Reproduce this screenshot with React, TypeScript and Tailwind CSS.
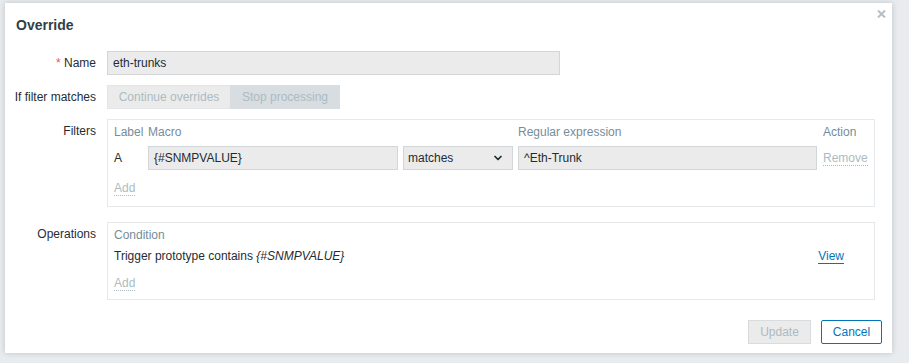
import { ChevronDown } from "lucide-react";

const font = "font-['Liberation_Sans',Arial,sans-serif]";

function Field({ value, width }: { value: string; width: string }) {
  return (
    <div
      className={`${width} h-[24px] shrink-0 rounded-none border border-[#d3d6d8] bg-[#ebebeb] pl-[5px] text-[12px] leading-[22px] text-[#1f2c33]`}
    >
      {value}
    </div>
  );
}

function Label({ children }: { children: React.ReactNode }) {
  return (
    <div className="w-[91px] shrink-0 text-right text-[12px] leading-[24px] text-[#1f2c33]">
      {children}
    </div>
  );
}

function DimLink({ children }: { children: React.ReactNode }) {
  return (
    <span className="border-b border-dotted border-[#acbbc2] text-[#acbbc2]">
      {children}
    </span>
  );
}

export default function App() {
  return (
    <div className={`${font} h-[363px] w-[909px] bg-[#e9ecef] pl-[5px] pt-[3px]`}>
      <div className="relative flex h-[350px] w-[887px] flex-col bg-white shadow-[0_0_6px_rgba(0,0,0,0.18)]">
        {/* Close */}
        <svg
          className="absolute right-[6px] top-[7px]"
          width="9"
          height="8"
          viewBox="0 0 9 8"
        >
          <path d="M1 0.5 L8 7.5 M8 0.5 L1 7.5" stroke="#b4bfc5" strokeWidth="2" />
        </svg>

        {/* Header */}
        <div className="pl-[11px] pt-[12px] text-[14px] font-bold leading-[20px] text-[#2f3f49]">
          Override
        </div>

        {/* Form */}
        <div className="mt-[16px] flex flex-col">
          <div className="flex gap-[11px]">
            <Label>
              <span className="text-[#e45959]">*</span> Name
            </Label>
            <Field value="eth-trunks" width="w-[453px]" />
          </div>

          <div className="mt-[10px] flex gap-[11px]">
            <Label>If filter matches</Label>
            <div className="flex h-[24px] text-[12px] leading-[24px] text-[#acbbc2]">
              <div className="w-[123px] border border-r-0 border-[#e3e6e8] bg-[#ebebeb] text-center leading-[22px]">
                Continue overrides
              </div>
              <div className="w-[110px] bg-[#d7dde1] text-center">Stop processing</div>
            </div>
          </div>

          {/* Filters */}
          <div className="mt-[10px] flex gap-[11px]">
            <Label>Filters</Label>
            <div className="w-[768px] border border-[#e6e9eb] px-[6px] pb-[11px] pt-[5px] text-[12px]">
              <div className="flex h-[14px] leading-[14px] text-[#768d99]">
                <div className="w-[34px]">Label</div>
                <div className="w-[370px]">Macro</div>
                <div className="w-[305px]">Regular expression</div>
                <div>Action</div>
              </div>
              <div className="mt-[7px] flex h-[24px] items-center text-[#1f2c33]">
                <div className="w-[34px] leading-[14px]">A</div>
                <Field value="{#SNMPVALUE}" width="w-[250px]" />
                <div className="ml-[5px] flex h-[24px] w-[110px] items-center justify-between border border-[#d3d6d8] bg-[#ebebeb] pl-[4px] pr-[8px] leading-[22px]">
                  <span>matches</span>
                  <ChevronDown size={12} strokeWidth={3.5} color="#1f2c33" />
                </div>
                <div className="ml-[5px]">
                  <Field value="^Eth-Trunk" width="w-[299px]" />
                </div>
                <div className="ml-[6px] leading-[14px]">
                  <DimLink>Remove</DimLink>
                </div>
              </div>
              <div className="mt-[11px] leading-[14px]">
                <DimLink>Add</DimLink>
              </div>
            </div>
          </div>

          {/* Operations */}
          <div className="mt-[15px] flex gap-[11px]">
            <Label>Operations</Label>
            <div className="w-[768px] border border-[#e6e9eb] px-[6px] pb-[9px] pt-[5px] text-[12px]">
              <div className="h-[14px] leading-[14px] text-[#768d99]">Condition</div>
              <div className="mt-[2px] flex h-[24px] items-center text-[#1f2c33]">
                <div className="flex-1 leading-[14px]">
                  Trigger prototype contains <i>{"{#SNMPVALUE}"}</i>
                </div>
                <span className="mr-[24px] border-b border-[#0275b8] leading-[14px] text-[#0275b8]">
                  View
                </span>
              </div>
              <div className="mt-[8px] leading-[14px]">
                <DimLink>Add</DimLink>
              </div>
            </div>
          </div>
        </div>

        {/* Footer */}
        <div className="mr-[10px] mt-[20px] flex justify-end gap-[10px] text-[12px]">
          <div className="h-[24px] w-[63px] border border-[#d9dcde] bg-[#ebebeb] text-center leading-[22px] text-[#acbbc2]">
            Update
          </div>
          <div className="h-[24px] w-[61px] rounded-[2px] border border-[#0275b8] bg-white text-center leading-[22px] text-[#0275b8]">
            Cancel
          </div>
        </div>
      </div>
    </div>
  );
}
